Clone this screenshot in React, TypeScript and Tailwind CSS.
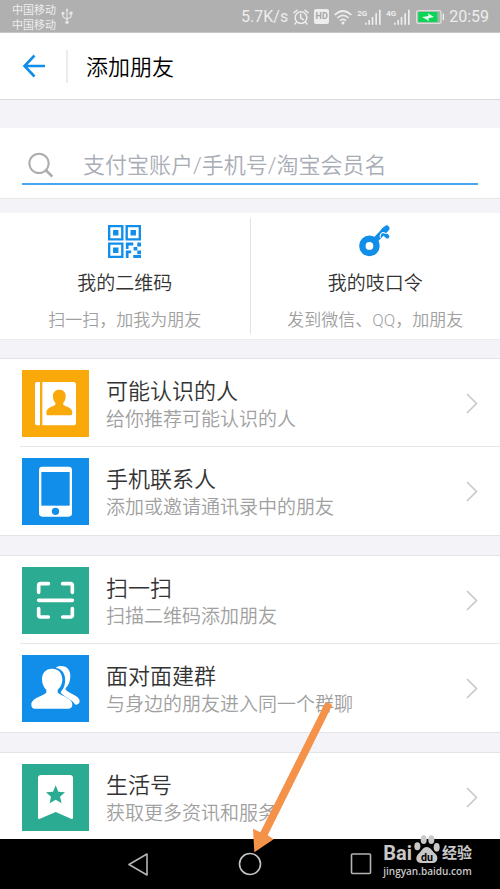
import React from 'react';

const FONT = "font-['Roboto','Noto_Sans_CJK_SC',sans-serif]";

function UsbIcon() {
  return (
    <svg className="h-4 w-3" viewBox="0 0 33 48" fill="none" stroke="#e6e6e6" strokeWidth="3.4" aria-hidden="true">
      <path d="M16.500 5V42M4 16V24Q4 28 8 29L16 33M29 15V24Q29 28 25 29L17 33" />
      <path d="M16.500 0L21 8H12Z" fill="#e6e6e6" stroke="none" />
      <circle cx="16.500" cy="43" r="5" fill="#e6e6e6" stroke="none" />
      <circle cx="4.500" cy="16" r="4.500" fill="#e6e6e6" stroke="none" />
      <path d="M24 11H33V20H24Z" fill="#e6e6e6" stroke="none" />
    </svg>
  );
}

function AlarmIcon() {
  return (
    <svg className="h-4 w-4" viewBox="0 0 48 48" fill="none" stroke="#ededed" strokeWidth="4.500" strokeLinecap="round" aria-hidden="true">
      <circle cx="24" cy="26" r="17.500" />
      <path d="M23 16V27L31 32M3 11L12 4M45 11L36 4M10 40L6 45M38 40L42 45" />
    </svg>
  );
}

function WifiIcon() {
  return (
    <svg className="h-4 w-[18px]" viewBox="0 0 54 48" fill="none" stroke="#ededed" strokeWidth="5" aria-hidden="true">
      <path d="M2 18Q27-6 52 18M10 27Q27 11 44 27M18 35Q27 27 36 35" />
      <circle cx="27" cy="42" r="4.500" fill="#ededed" stroke="none" />
    </svg>
  );
}

function Signal({ label }: { label: string }) {
  return (
    <span className="flex h-4 items-start">
      <span className="w-2 text-[8px] leading-[9px] font-bold">{label}</span>
      <svg className="h-4 w-4" viewBox="0 0 48 48" fill="#ededed" aria-hidden="true">
        <path d="M0 41H5V47H0ZM10 33H15V47H10ZM20 24H25V47H20ZM31 13H36V47H31ZM42 2H47V47H42Z" />
      </svg>
    </span>
  );
}

function Battery() {
  return (
    <svg className="h-[14px] w-[28px]" viewBox="0 0 84 42" aria-hidden="true">
      <rect x="2" y="2" width="73" height="38" rx="6" fill="#9fb5a5" stroke="#dedede" strokeWidth="4" />
      <rect x="7" y="6" width="57" height="30" fill="#0bd457" />
      <path d="M18 21L38 18L35 10L54 21L37 25L39 33Z" fill="#e8fff0" />
      <path d="M80 11H84V31H80Z" fill="#ededed" />
    </svg>
  );
}

function StatusBar() {
  return (
    <div className="flex h-[33px] items-center justify-between border-b border-[#c6c6c6] bg-[#b0b0b0] pr-[11px] pl-3 text-[#ededed]">
      <div className="flex items-center gap-[5px]">
        <div className="pt-[3px] text-[11px] leading-[15px]">
          <div>中国移动</div>
          <div>中国移动</div>
        </div>
        <UsbIcon />
      </div>
      <div className="flex items-center gap-[5px] pt-px text-[16px] leading-5">
        <span>5.7K/s</span>
        <AlarmIcon />
        <span className="flex h-[15px] w-[15px] items-center justify-center rounded-[2px] bg-[#ededed] text-[9px] leading-none font-bold text-[#a6a6a6]">HD</span>
        <WifiIcon />
        <Signal label="2G" />
        <Signal label="4G" />
        <span className="flex pl-px"><Battery /></span>
        <span>20:59</span>
      </div>
    </div>
  );
}

function QrIcon() {
  return (
    <svg className="h-[33px] w-[33px]" viewBox="0 0 98 98" fill="#108ee9" aria-hidden="true">
      <g fill="none" stroke="#108ee9" strokeWidth="7">
        <path d="M3.500 3.500H42.500V42.500H3.500ZM55.500 3.500H94.500V42.500H55.500ZM3.500 55.500H42.500V94.500H3.500Z" />
      </g>
      <path d="M15 15H31V31H15ZM67 15H83V31H67ZM15 67H31V83H15Z" />
      <path d="M53 52H75V61H61V71H53ZM53 76H69V84H61V98H53ZM87 52H98V64H87ZM76 65H87V76H76ZM87 76H98V87H87ZM75 89H98V98H75Z" />
    </svg>
  );
}

function KeyIcon() {
  return (
    <svg className="h-[33px] w-[33px]" viewBox="0 0 98 98" fill="none" stroke="#108ee9" strokeLinecap="round" aria-hidden="true">
      <circle cx="31" cy="62" r="21" strokeWidth="19" />
      <path d="M50 43L80 12" strokeWidth="17" strokeLinecap="butt" />
      <path d="M74 17L82 10" strokeWidth="17" />
      <path d="M75 25L84 34" strokeWidth="12" />
      <path d="M63 37Q62 25 71 22Q76 22 78 25L90 23" stroke="#fff" strokeWidth="3" />
    </svg>
  );
}

function BookArt() {
  return (
    <>
      <path d="M45 36H54V166H45Q39 166 39 160V42Q39 36 45 36ZM61 36H154Q162 36 162 44V158Q162 166 154 166H61Z" />
      <path fill="#faa90a" d="M112 59C124 59 132 67 131 80C131 89 127 94 124 98V105C133 110 151 113 151 128Q151 136 145 136H79Q72 136 73 128C74 113 91 110 100 105V98C96 94 93 88 93 80C92 67 100 59 112 59Z" />
    </>
  );
}

function PhoneArt() {
  return (
    <>
      <rect x="51" y="26" width="99" height="150" rx="10" />
      <rect x="58" y="42" width="85" height="101" fill="#108ee9" />
      <circle cx="100.500" cy="160" r="11" fill="#108ee9" />
    </>
  );
}

function ScanArt() {
  return (
    <path
      d="M50 76V56Q50 50 56 50H79M122 50H145Q151 50 151 56V76M151 125V144Q151 150 145 150H122M79 150H56Q50 150 50 144V125M50 100H151"
      fill="none" stroke="#fff" strokeWidth="11" strokeLinecap="round"
    />
  );
}

function PeopleArt() {
  return (
    <>
      <path d="M101 38C108 34 113 33 118 33C135 33 145 45 145 63C145 80 139 92 131 99V104C139 114 173 122 173 138Q173 149 160 149C150 132 124 125 117 114C115 111 118 108 121 104C129 94 130 79 129 68C127 49 115 41 101 38Z" />
      <path d="M90 41C110 41 121 55 121 73C121 89 114 98 107 105V112C112 122 151 128 151 148Q151 161 140 161H39Q28 161 28 149C28 128 68 123 73 112V105C66 98 60 88 60 73C60 54 71 41 90 41Z" />
    </>
  );
}

function BookmarkArt() {
  return (
    <>
      <path d="M57 33H144Q153 33 153 42V161Q153 167 147 164L101 144L54 164Q48 167 48 161V42Q48 33 57 33Z" />
      <path fill="#2bab91" d="M101 64L109 83L129 85L114 98L119 118L101 107L83 118L87 98L72 85L93 83Z" />
    </>
  );
}

type Item = { title: string; note: string; tile: string; art: React.ReactNode };

const groups: Item[][] = [
  [
    { title: '可能认识的人', note: '给你推荐可能认识的人', tile: 'bg-[#faa90a]', art: <BookArt /> },
    { title: '手机联系人', note: '添加或邀请通讯录中的朋友', tile: 'bg-[#108ee9]', art: <PhoneArt /> },
  ],
  [
    { title: '扫一扫', note: '扫描二维码添加朋友', tile: 'bg-[#2bab91]', art: <ScanArt /> },
    { title: '面对面建群', note: '与身边的朋友进入同一个群聊', tile: 'bg-[#108ee9]', art: <PeopleArt /> },
  ],
  [{ title: '生活号', note: '获取更多资讯和服务', tile: 'bg-[#2bab91]', art: <BookmarkArt /> }],
];

function Row({ item }: { item: Item }) {
  return (
    <button type="button" className="flex w-full items-start px-[22px] pt-[11px] pb-2 text-left">
      <span className={`block h-[67px] w-[67px] shrink-0 ${item.tile}`}>
        <svg className="h-full w-full" viewBox="0 0 201 201" fill="#fff" aria-hidden="true">{item.art}</svg>
      </span>
      <span className="ml-[17px] flex-1 pt-2">
        <span className="block text-[22px] leading-7 text-[#333]">{item.title}</span>
        <span className="block text-[19px] leading-7 text-[#a0a0a0]">{item.note}</span>
      </span>
      <svg className="h-[67px] w-3" viewBox="0 0 12 67" fill="none" stroke="#cacaca" strokeWidth="1.700" aria-hidden="true">
        <path d="M1 24L10.500 33.500L1 43" />
      </svg>
    </button>
  );
}

function Shortcut({ icon, title, note }: { icon: React.ReactNode; title: string; note: string }) {
  return (
    <button type="button" className="flex flex-1 flex-col items-center pt-[7px]">
      {icon}
      <span className="mt-3 text-[19px] leading-7 text-[#333]">{title}</span>
      <span className="mt-2 text-[17px] leading-7 text-[#a0a0a0]">{note}</span>
    </button>
  );
}

function Watermark() {
  return (
    <div className="absolute right-7 bottom-[10px] text-[#c8c8c8]">
      <div className="flex h-[28px] items-end">
        <span className="text-[20px] leading-[21px] font-bold">Bai</span>
        <svg className="mx-[2px] h-[29px] w-[26px]" viewBox="0 0 78 87" fill="#c8c8c8" aria-hidden="true">
          <ellipse cx="10" cy="34" rx="9" ry="12" />
          <ellipse cx="29" cy="14" rx="9" ry="13" />
          <ellipse cx="52" cy="14" rx="9" ry="13" />
          <ellipse cx="68" cy="37" rx="9" ry="13" />
          <path d="M38 36C50 36 55 49 64 56C74 64 72 84 56 84H22C5 84 3 66 13 57C23 48 26 36 38 36Z" />
          <text x="39" y="77" textAnchor="middle" fontSize="32" fontWeight="700" fill="#000">du</text>
        </svg>
        <span className="text-[15px] leading-[21px] font-bold">经验</span>
      </div>
      <div className="font-['Open_Sans',sans-serif] text-[10px] leading-[15px] font-semibold">jingyan.baidu.com</div>
    </div>
  );
}

function NavBar() {
  return (
    <nav className="relative flex h-[50px] items-center justify-center gap-[88px] bg-black">
      <button type="button" aria-label="返回">
        <svg className="h-6 w-6" viewBox="0 0 24 24" fill="none" stroke="#b4b4b4" strokeWidth="1.600" strokeLinejoin="round" aria-hidden="true">
          <path d="M21 2L3 12.500L21 23Z" />
        </svg>
      </button>
      <button type="button" aria-label="主页">
        <svg className="h-6 w-6" viewBox="0 0 24 24" fill="none" stroke="#c4c4c4" strokeWidth="1.600" aria-hidden="true">
          <circle cx="12" cy="12" r="10.500" />
        </svg>
      </button>
      <button type="button" aria-label="最近任务">
        <svg className="h-6 w-6" viewBox="0 0 24 24" fill="none" stroke="#b4b4b4" strokeWidth="1.600" aria-hidden="true">
          <rect x="1.500" y="2" width="19" height="19.500" rx="1" />
        </svg>
      </button>
      <Watermark />
      <svg className="pointer-events-none absolute bottom-[34px] left-1/2 h-[175px] w-[84px]" viewBox="0 0 252 525" fill="#f4924a" aria-hidden="true">
        <path d="M227 65L247 75L53 466L71 478L13 517L9 446L31 457Z" />
      </svg>
    </nav>
  );
}

export default function App() {
  return (
    <div className={`flex min-h-screen flex-col bg-[#f4f3f8] ${FONT}`}>
      <StatusBar />
      <header className="flex h-[67px] items-center border-b border-[#d9d9dc] bg-white pl-[22px]">
        <button type="button" aria-label="后退">
          <svg className="h-6 w-6" viewBox="0 0 24 24" fill="none" stroke="#108ee9" strokeWidth="2.600" aria-hidden="true">
            <path d="M12.500 1.500L2.500 12L12.500 22.500M2.500 12H23" />
          </svg>
        </button>
        <div className="ml-5 h-[33px] w-[2px] bg-[#ececef]" />
        <h1 className="ml-[18px] pt-1 text-[22px] leading-8 font-[350] text-black">添加朋友</h1>
      </header>

      <main className="flex-1 font-[350]">
        <div className="mt-7 border-b border-[#e6e6e8] bg-white px-[22px] pt-[18px] pb-[13px]">
          <label className="flex h-[39px] items-center border-b-2 border-[#48a6ef]">
            <svg className="ml-[6px] h-[26px] w-[26px] shrink-0" viewBox="0 0 78 78" fill="none" stroke="#adadad" strokeWidth="6" aria-hidden="true">
              <circle cx="33" cy="34" r="29" />
              <path d="M53 54L73 74" strokeWidth="8" />
            </svg>
            <input
              type="text"
              aria-label="搜索朋友"
              placeholder="支付宝账户/手机号/淘宝会员名"
              className="ml-[29px] h-9 min-w-0 flex-1 bg-transparent pt-[2px] text-[22px] text-[#333] outline-none placeholder:text-[#a9adb6]"
            />
          </label>
        </div>

        <div className="mt-[14px] flex h-[127px] border-b border-[#ebebed] bg-white py-[5px]">
          <Shortcut icon={<QrIcon />} title="我的二维码" note="扫一扫，加我为朋友" />
          <div className="w-px bg-[#e2e2e4]" />
          <Shortcut icon={<KeyIcon />} title="我的吱口令" note="发到微信、QQ，加朋友" />
        </div>

        <div className="mt-[18px] flex flex-col gap-[19px]">
          {groups.map((items, g) => (
            <ul key={g} className={g < groups.length - 1 ? 'border-y border-[#e4e4e7] bg-white' : 'border-t border-[#e4e4e7] bg-white'}>
              {items.map((item, i) => (
                <li key={item.title}>
                  <Row item={item} />
                  {i < items.length - 1 && <div className="mt-px ml-5 h-px bg-[#e6e6e8]" />}
                  {i === items.length - 1 && g < groups.length - 1 && <div className="h-[2px]" />}
                </li>
              ))}
            </ul>
          ))}
        </div>
      </main>
      <NavBar />
    </div>
  );
}
